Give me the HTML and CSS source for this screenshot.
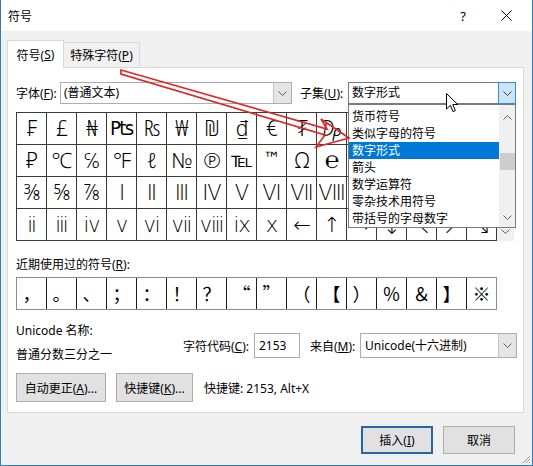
FILE: index.html
```html
<!DOCTYPE html>
<html lang="zh-CN">
<head>
<meta charset="utf-8">
<title>符号</title>
<link rel="stylesheet" href="styles.css">
</head>
<body>
<div class="window">
  <div class="titlebar">
    <span class="title">符号</span>
    <span class="help">?</span>
    <span class="close"><svg width="11" height="11" viewBox="0 0 11 11"><path d="M0.5 0.5 L10.5 10.5 M10.5 0.5 L0.5 10.5" stroke="#000" stroke-width="1" fill="none"/></svg></span>
  </div>
  <div class="body">
    <div class="tabs">
      <div class="tab active">符号(<u>S</u>)</div>
      <div class="tab">特殊字符(<u>P</u>)</div>
    </div>
    <div class="panel">
      <div class="font-row">
        <span class="lbl-font">字体(<u>F</u>):</span>
        <div class="select font-select"><span class="val">(普通文本)</span><span class="arrow"><svg width="9" height="5" viewBox="0 0 9 5"><path d="M0.5 0.5 L4.5 4.5 L8.5 0.5" fill="none" stroke="#606060"/></svg></span></div>
        <span class="lbl-subset">子集(<u>U</u>):</span>
        <div class="select subset-select"><span class="val">数字形式</span><span class="arrow"><svg width="9" height="5" viewBox="0 0 9 5"><path d="M0.5 0.5 L4.5 4.5 L8.5 0.5" fill="none" stroke="#404040"/></svg></span></div>
      </div>
      <div class="grid-wrap">
        <div class="sym-grid">
          <span>₣</span><span>£</span><span>₦</span><span class="dv">₧</span><span>₨</span><span>₩</span><span>₪</span><span>₫</span><span>€</span><span>₮</span><span>₯</span><span></span><span></span><span></span><span></span><span></span>
          <span>₽</span><span>℃</span><span>℅</span><span>℉</span><span>ℓ</span><span>№</span><span>℗</span><span class="dv tel">℡</span><span class="dv tm">™</span><span>Ω</span><span class="serif">℮</span><span></span><span></span><span></span><span></span><span></span>
          <span>⅜</span><span>⅝</span><span>⅞</span><span>Ⅰ</span><span>Ⅱ</span><span>Ⅲ</span><span>Ⅳ</span><span>Ⅴ</span><span>Ⅵ</span><span>Ⅶ</span><span>Ⅷ</span><span></span><span></span><span></span><span></span><span></span>
          <span>ⅱ</span><span>ⅲ</span><span>ⅳ</span><span>ⅴ</span><span>ⅵ</span><span>ⅶ</span><span>ⅷ</span><span>ⅸ</span><span>ⅹ</span><span>←</span><span>↑</span><span>→</span><span class="low">↓</span><span class="low">↖</span><span class="low">↗</span><span class="low">↘</span>
        </div>
        <div class="vscroll"><svg width="9" height="5" viewBox="0 0 9 5"><path d="M0.5 0.5 L4.5 4.5 L8.5 0.5" fill="none" stroke="#606060"/></svg></div>
      </div>
      <div class="recent-label">近期使用过的符号(<u>R</u>):</div>
      <div class="recent">
        <span>，</span><span>。</span><span>、</span><span>；</span><span>：</span><span>！</span><span>？</span><span>“</span><span>”</span><span>（</span><span>【</span><span>）</span><span>％</span><span>＆</span><span>】</span><span>※</span>
      </div>
      <div class="info">
        <div class="names">
          <div>Unicode 名称:</div>
          <div>普通分数三分之一</div>
        </div>
        <div class="code">
          <span class="lbl-code">字符代码(<u>C</u>):</span>
          <div class="input">2153</div>
          <span class="lbl-from">来自(<u>M</u>):</span>
          <div class="select from-select"><span class="val">Unicode(十六进制)</span><span class="arrow"><svg width="9" height="5" viewBox="0 0 9 5"><path d="M0.5 0.5 L4.5 4.5 L8.5 0.5" fill="none" stroke="#606060"/></svg></span></div>
        </div>
      </div>
      <div class="btn-row">
        <button class="btn btn-auto">自动更正(<u>A</u>)...</button>
        <button class="btn btn-key">快捷键(<u>K</u>)...</button>
        <span class="shortcut">快捷键: 2153, Alt+X</span>
      </div>
    </div>
    <div class="footer">
      <button class="btn primary">插入(<u>I</u>)</button>
      <button class="btn">取消</button>
    </div>
  </div>

  <div class="list">
    <div class="items">
      <div class="item">货币符号</div>
      <div class="item">类似字母的符号</div>
      <div class="item selected">数字形式</div>
      <div class="item">箭头</div>
      <div class="item">数学运算符</div>
      <div class="item">零杂技术用符号</div>
      <div class="item">带括号的字母数字</div>
    </div>
    <div class="lscroll">
      <div class="sb-up"><svg width="9" height="5" viewBox="0 0 9 5"><path d="M0.5 4.5 L4.5 0.5 L8.5 4.5" fill="none" stroke="#606060"/></svg></div>
      <div class="thumb"></div>
      <div class="sb-down"><svg width="9" height="5" viewBox="0 0 9 5"><path d="M0.5 0.5 L4.5 4.5 L8.5 0.5" fill="none" stroke="#606060"/></svg></div>
    </div>
  </div>

  <svg class="cursor" width="13" height="20" viewBox="0 0 13 20"><path d="M0.5 0.5 L0.5 16 L4.3 12.4 L7 18.6 L9.4 17.6 L6.8 11.5 L11.7 11.5 Z" fill="#fff" stroke="#000" stroke-width="1"/></svg>

  <svg class="annot" width="533" height="466" viewBox="0 0 533 466">
    <path d="M121 70 L327 129 L321 119 L349 138 L316 147 L325 135 L121 74 Z" fill="none" stroke="#dc2a2a" stroke-width="1.7" stroke-linejoin="miter"/>
  </svg>

  <svg class="grip" width="9" height="9" viewBox="0 0 9 9"><path d="M8 1 L1 8 M8 4 L4 8 M8 7 L7 8" stroke="#9a9a9a" stroke-width="1"/></svg>
</div>
</body>
</html>
```

FILE: styles.css
```css
* { box-sizing: border-box; }
html, body { margin: 0; padding: 0; }
body {
  width: 533px;
  height: 466px;
  overflow: hidden;
  background: #f0f0f0;
  font-family: "Noto Sans", "Noto Sans CJK SC", sans-serif;
  font-size: 12px;
  color: #000;
}
u { text-decoration: underline; text-underline-offset: 1px; }

.window {
  position: relative;
  width: 533px;
  height: 466px;
  border: 1px solid #2f7dbd;
  border-top: none;
  background: #f0f0f0;
}

.titlebar {
  height: 31px;
  background: #fff;
  display: flex;
  align-items: center;
  padding-left: 7px;
  padding-right: 16px;
}
.title { flex: 1; font-size: 12px; }
.help {
  width: 20px;
  text-align: center;
  font-size: 13px;
  margin-right: 23px;
}
.close {
  width: 20px;
  display: flex;
  justify-content: center;
  align-items: center;
}

.body { padding: 9px 0 0 6px; }

.tabs {
  display: flex;
  align-items: flex-end;
  height: 27px;
}
.tab {
  height: 25px;
  border: 1px solid #d9d9d9;
  border-bottom: none;
  background: #f0f0f0;
  display: flex;
  align-items: center;
  justify-content: center;
}
.tab:nth-child(2) { width: 76px; border-left: none; }
.tab.active {
  width: 57px;
  height: 28px;
  background: #fff;
  margin-bottom: -1px;
  position: relative;
  z-index: 1;
}

.panel {
  width: 517px;
  height: 346px;
  border: 1px solid #d9d9d9;
  background: #fff;
  padding-left: 8px;
}

.font-row {
  display: flex;
  align-items: center;
  height: 22px;
  margin-top: 14px;
}
.lbl-font { width: 44px; }
.lbl-subset { width: 48px; margin-left: 8px; }

.select {
  display: flex;
  height: 22px;
  border: 1px solid #abadb3;
  background: #fff;
}
.select .val {
  flex: 1;
  padding-left: 3px;
  line-height: 20px;
  white-space: nowrap;
  overflow: hidden;
}
.select .arrow {
  width: 18px;
  display: flex;
  align-items: center;
  justify-content: center;
  background: #e5e5e5;
  border-left: 1px solid #c4c4c4;
}
.font-select { width: 232px; }
.subset-select { width: 168px; border-color: #7a7a7a; }
.subset-select .arrow { background: #cce4f7; border: 1px solid #3c8ad6; margin: -1px -1px -1px 0; width: 18px; }

.grid-wrap {
  display: flex;
  margin-top: 8px;
}
.sym-grid {
  display: grid;
  grid-template-columns: repeat(16, 29px);
  grid-auto-rows: 31px;
  gap: 1px;
  background: #3a3a3a;
  border: 1px solid #3a3a3a;
  font-family: "Noto Sans", "DejaVu Sans", sans-serif;
  font-size: 21px;
  font-weight: 300;
}
.sym-grid span {
  background: #fff;
  text-align: center;
  line-height: 31px;
  white-space: nowrap;
  overflow: hidden;
  letter-spacing: -1px;
}
.sym-grid .dv { font-family: "DejaVu Sans", sans-serif; font-size: 19px; font-weight: 400; }
.sym-grid .tel { font-size: 20px; }
.sym-grid .tm { font-size: 17px; line-height: 26px; letter-spacing: 0; }
.sym-grid .serif { font-family: "Liberation Serif", "DejaVu Serif", serif; font-size: 24px; }
.sym-grid .low { line-height: 34px; }
.vscroll {
  width: 17px;
  height: 129px;
  background: #f0f0f0;
  display: flex;
  flex-direction: column;
  justify-content: flex-end;
  align-items: center;
  padding-bottom: 7px;
}

.recent-label {
  margin-top: 16px;
  line-height: 16px;
}
.recent {
  display: grid;
  grid-template-columns: repeat(16, 29px);
  grid-auto-rows: 31px;
  gap: 1px;
  width: 481px;
  margin-top: 4px;
  background: #1e1e1e;
  border: 1px solid #8c8c8c;
  font-family: "Noto Sans CJK SC", sans-serif;
  font-size: 18px;
}
.recent span {
  background: #fff;
  text-align: center;
  line-height: 31px;
  overflow: hidden;
}

.info {
  display: flex;
  margin-top: 13px;
}
.names {
  width: 167px;
  display: flex;
  flex-direction: column;
  gap: 8px;
  line-height: 16px;
}
.code {
  display: flex;
  align-items: center;
  margin-top: 10px;
  height: 25px;
}
.lbl-code { width: 71px; }
.input {
  width: 46px;
  height: 25px;
  border: 1px solid #abadb3;
  padding-left: 4px;
  line-height: 23px;
}
.lbl-from { width: 50px; margin-left: 10px; }
.from-select { width: 157px; height: 25px; }
.from-select .val { line-height: 23px; padding-left: 4px; }

.btn-row {
  display: flex;
  align-items: center;
  margin-top: 10px;
  height: 29px;
}
.btn {
  height: 29px;
  background: #e1e1e1;
  border: 1px solid #adadad;
  font-family: inherit;
  font-size: 12px;
  color: #000;
  padding: 0;
}
.btn-auto { width: 90px; }
.btn-key { width: 77px; margin-left: 10px; }
.shortcut { margin-left: 11px; }

.footer {
  display: flex;
  justify-content: flex-end;
  gap: 10px;
  margin-top: 13px;
  padding-right: 17px;
}
.footer .btn { width: 72px; height: 28px; }
.footer .primary { border: 2px solid #2467a8; }

.list {
  position: absolute;
  left: 347px;
  top: 104px;
  width: 168px;
  height: 124px;
  border: 1px solid #7a7a7a;
  background: #fff;
  display: flex;
  z-index: 2;
}
.items {
  width: 150px;
  padding-top: 3px;
}
.item {
  height: 17px;
  line-height: 17px;
  padding-left: 3px;
  white-space: nowrap;
}
.item.selected { background: #0078d7; color: #fff; }
.lscroll {
  width: 16px;
  background: #f0f0f0;
  display: flex;
  flex-direction: column;
  align-items: center;
}
.sb-up { height: 24px; display: flex; align-items: center; }
.thumb { width: 15px; height: 17px; margin-top: 24px; background: #cdcdcd; }
.sb-down { margin-top: auto; height: 20px; display: flex; align-items: center; }

.cursor { position: absolute; left: 445px; top: 93px; z-index: 4; }
.annot { position: absolute; left: -1px; top: 0; z-index: 3; pointer-events: none; }
.grip { position: absolute; right: 1px; bottom: 1px; }
```
